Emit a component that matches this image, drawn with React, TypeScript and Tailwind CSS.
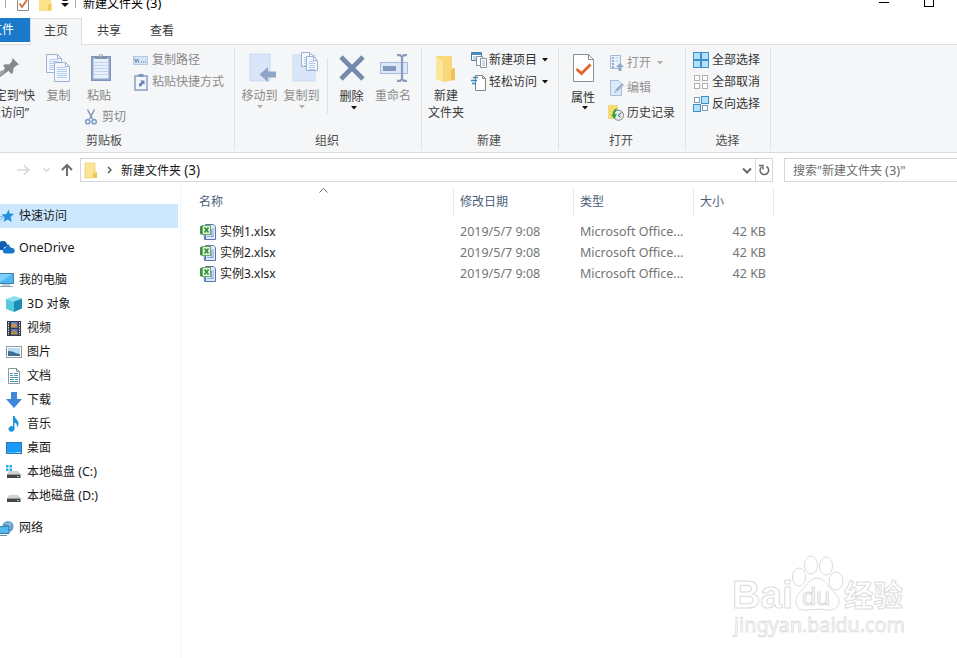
import React from 'react';

type Kids = { children?: React.ReactNode };

function Svg({ w, h, vb, className = '', children }: { w: number; h: number; vb?: string; className?: string } & Kids) {
  return (
    <svg width={w} height={h} viewBox={vb ?? `0 0 ${w} ${h}`} className={`block shrink-0 ${className}`} fill="none">
      {children}
    </svg>
  );
}

const Caret = ({ color = '#111', className = '' }: { color?: string; className?: string }) => (
  <Svg w={6} h={4} className={className}>
    <path d="M0 0h6L3 3.500z" fill={color} />
  </Svg>
);

const FolderIcon = ({ w, h }: { w: number; h: number }) => (
  <Svg w={w} h={h} vb="0 0 14 17">
    <path d="M1 1h10v8l2 1v6H1z" fill="#fbe08a" />
    <path d="M1 1h10v8l-2 2v5H1z" fill="#fce596" stroke="#ecc95e" strokeWidth=".7" />
    <path d="M13 10v6H9.500v-4z" fill="#edc455" />
  </Svg>
);

const PinIcon = () => (
  <Svg w={19} h={19}>
    <path d="M12.500 0L19 6.500l-2 .7L13.500 10l-.5 4.500-1.500 1.500-3-3.300L3 17l-3 2v-2.500L5 10.500 3.200 7.500 5 6.200l4.200.2L12 3z" fill="#85898c" />
    <path d="M0 13.500l3-1.500 1.500 1.500L1.500 17H0z" fill="#a3a6a9" />
  </Svg>
);

const Page = ({ x, y, w = 15, h = 19 }: { x: number; y: number; w?: number; h?: number }) => (
  <g transform={`translate(${x} ${y})`} stroke="#9db2d2">
    <path d={`M.5.5h${w - 5}l4 4v${h - 5}h-${w - 1}z`} fill="#f4f8fe" />
    <path d={`M${w - 4.5}.5v4h4`} />
    <path d={`M3 5.500h${w - 7}M3 7.500h${w - 6}M3 9.500h${w - 6}M3 11.500h${w - 6}M3 13.500h${w - 6}`} stroke="#b3cdf0" />
    {h > 18 && <path d={`M3 15.500h${w - 6}`} stroke="#b3cdf0" />}
  </g>
);

const CopyIcon = () => (
  <Svg w={25} h={28}>
    <Page x={0} y={0} w={16} h={19} />
    <Page x={8} y={8} w={16} h={20} />
  </Svg>
);

const PasteIcon = () => (
  <Svg w={22} h={29}>
    <rect x="1.500" y="4.500" width="19" height="24" fill="#90a6c9" stroke="#7f95ba" />
    <path d="M3.500 6.500h15v20h-15z" fill="#e9f0fc" />
    <path d="M4 10.500h14M4 13.500h14M4 16.500h14M4 19.500h14M4 22.500h14" stroke="#c3d4ee" />
    <path d="M5 4h4a2 2 0 0 1 4 0h4v3H5z" fill="#8194b0" />
    <circle cx="11" cy="3.500" r=".9" fill="#f5f6f7" />
  </Svg>
);

const ScissorsIcon = () => (
  <Svg w={12} h={16}>
    <path d="M2.500.5l5 9.500M9.500.5l-5 9.500" stroke="#8799b5" strokeWidth="1.600" />
    <circle cx="2.800" cy="12.700" r="2.100" stroke="#7f9cc8" strokeWidth="1.600" />
    <circle cx="9.200" cy="12.700" r="2.100" stroke="#7f9cc8" strokeWidth="1.600" />
  </Svg>
);

const PathIcon = () => (
  <Svg w={15} h={9}>
    <rect x=".5" y=".5" width="14" height="8" fill="#d3e3f8" stroke="#b5c9e5" />
    <path d="M1.500 2.500l1.500 4 1.500-3.500 1.500 3.500" stroke="#6a80a5" />
    <path d="M8 6h1M10 6h1M12 6h1" stroke="#6a80a5" />
  </Svg>
);

const PasteLinkIcon = () => (
  <Svg w={14} h={17}>
    <rect x="1" y="2" width="12" height="14" fill="#f3f7fd" stroke="#8fa4c6" strokeWidth="1.600" />
    <path d="M4.500 0h5v3h-5z" fill="#8196b8" />
    <path d="M5 12.500V10l2.500-2L6 6.500h4.500V11L9 9.500l-2 3z" fill="#6683b2" />
  </Svg>
);

const MoveIcon = () => (
  <Svg w={27} h={30}>
    <path d="M1 1h20v27H1z" fill="#d9e6f9" stroke="#cbdaf0" />
    <path d="M10.500 21.500l8.500-7.500v4.500h8v6h-8V29z" fill="#8fa4c6" />
  </Svg>
);

const CopyToIcon = () => (
  <Svg w={27} h={31}>
    <path d="M1 3h22v26H1z" fill="#d9e6f9" stroke="#cbdaf0" />
    <Page x={9} y={0} w={13} h={15} />
    <Page x={14} y={4} w={12} h={15} />
  </Svg>
);

const DeleteIcon = () => (
  <Svg w={26} h={26}>
    <path d="M2 2l22 22M24 2L2 24" stroke="#7389ad" strokeWidth="4.600" />
  </Svg>
);

const RenameIcon = () => (
  <Svg w={29} h={28}>
    <rect x=".5" y="8.500" width="27" height="11" fill="#dbe8fa" stroke="#a7bddd" />
    <rect x="3" y="12" width="13" height="5" fill="#8398bd" />
    <path d="M22 2v24M17 1.200h3l2 1.600 2-1.600h3M17 26.800h3l2-1.600 2 1.600h3" stroke="#8a9cba" strokeWidth="2.200" />
  </Svg>
);

const BigFolderIcon = () => (
  <Svg w={20} h={28}>
    <path d="M0 1h16v12l3 2v10l-11 2-8-3z" fill="#f8d878" />
    <path d="M0 1l7 5v21l-7-3z" fill="#fbe69c" />
    <path d="M15 14l4-1v12h-4z" fill="#edc45b" />
  </Svg>
);

const NewItemIcon = () => (
  <Svg w={16} h={16}>
    <path d="M.5.500h10v8h-10z" fill="#fff" stroke="#54809b" />
    <path d="M1 2h9" stroke="#3d95c6" strokeWidth="2" />
    <path d="M2 5h3M2 7h3" stroke="#6ab1dc" />
    <path d="M5.500 4.500h6v9h-6z" fill="#fff" stroke="#8a9299" />
    <path d="M9.500 6.500h6v9h-6z" fill="#fff" stroke="#8a959e" />
    <path d="M11 9h3M11 11h3M11 13h3" stroke="#8fbcd9" />
  </Svg>
);

const EasyAccessIcon = () => (
  <Svg w={16} h={17}>
    <path d="M4.500 1.500h7l3 3v12h-10z" fill="#fff" stroke="#7c878e" />
    <path d="M11.500 1.500v3h3" stroke="#7c878e" />
    <path d="M2 3.500h5M0 6.500h6M1 9.500h4" stroke="#2e86be" strokeWidth="1.400" />
  </Svg>
);

const PropsIcon = () => (
  <Svg w={23} h={29}>
    <path d="M1.500.500h15l5 5v22h-20z" fill="#fff" stroke="#8b8f92" />
    <path d="M16.500.500v5h5" stroke="#8b8f92" />
    <path d="M4.500 15l5 4.500 9-9" stroke="#e0642c" strokeWidth="2.800" />
  </Svg>
);

const OpenIcon = () => (
  <Svg w={14} h={16}>
    <path d="M.5.500h10v13H.5z" fill="#edf3fc" stroke="#a5b7d2" />
    <path d="M2 3h2M2 6h2M2 9h2M2 12h2" stroke="#7896c5" strokeWidth="1.500" />
    <path d="M5.500 3H9M5.500 6H9" stroke="#bfd0e8" />
    <path d="M10 8l4 4h-2.500v4h-3v-4H6z" fill="#8fa6ca" />
  </Svg>
);

const EditIcon = () => (
  <Svg w={14} h={16}>
    <path d="M.5.500h8l3 3v12H.5z" fill="#dce9fa" stroke="#a8bedd" />
    <path d="M4 13l1-3 7-7 2 2-7 7z" fill="#9db2d2" />
    <path d="M5 10l2 2" stroke="#fff" strokeWidth=".7" />
  </Svg>
);

const HistoryIcon = () => (
  <Svg w={16} h={16}>
    <path d="M0 0h10v14H0z" fill="#f6da77" />
    <circle cx="10.500" cy="10.300" r="5" fill="#e9edee" stroke="#7c878c" />
    <path d="M10 10.500l3.500-3M10 10.500l2.500 1.500" stroke="#44565e" />
    <path d="M8.500 3.500C5.500 4.500 4.500 7 4.800 9.500L3 9.800 6.500 14 9 9l-2 .3c0-2 .3-4 2.500-5.300z" fill="#2fa33a" />
  </Svg>
);

function SelectIcon({ kind }: { kind: 'all' | 'none' | 'invert' }) {
  const cells = [[0, 0], [8, 0], [0, 8], [8, 8]];
  return (
    <Svg w={16} h={16}>
      {cells.map(([x, y], i) => {
        const on = kind === 'all' || (kind === 'invert' && (i === 1 || i === 2));
        return on ? (
          <rect key={i} x={x + 0.5} y={y + 0.5} width="7" height="7" fill="#b4e0fa" stroke="#3b91c9" />
        ) : (
          <rect key={i} x={x + 1.5} y={y + 1.5} width="5" height="5" fill="#fff" stroke={kind === 'none' ? '#b0b0b0' : '#7f9bad'} />
        );
      })}
    </Svg>
  );
}

const XlsxIcon = () => (
  <Svg w={16} h={16}>
    <path d="M3.500 4.500h9v11h-8z" fill="#c9daf5" stroke="#5c7cba" />
    <path d="M5.500.500h8l2 2v13h-10z" fill="#dfe9fa" stroke="#5876ae" />
    <path d="M7 12.500h6.500M13 4v9M11.500 5v7" stroke="#8aaae0" />
    <path d="M0 2.500L2.500 1v10L0 10z" fill="#3a9440" />
    <rect x="2.500" y="1.500" width="8" height="9" fill="#dff2d8" stroke="#6aae64" />
    <path d="M4.500 3.500l4 5M8.500 3.500l-4 5" stroke="#2f8a38" strokeWidth="1.500" />
  </Svg>
);

/* Navigation pane icons */
const StarIcon = () => (
  <Svg w={16} h={16}>
    <path d="M9.500 1.500l1.300 4 4.200.5-3.300 3 1 5-4-2.500-4.200 2.500 1.200-4.500L2.500 6.500l5-.6z" fill="#2590d9" />
    <path d="M1 8.500l4 .5M0 12.500l4-2.500" stroke="#6bb7ea" />
  </Svg>
);
const CloudIcon = () => (
  <Svg w={16} h={16}>
    <path d="M0 10V5.500a4 4 0 0 1 8-1c1.500-.3 2.500.5 2.500 1.500L5.500 7 4 10z" fill="#0f5fae" />
    <path d="M6 13.500a2.800 2.800 0 0 1 0-5.500 3.400 3.400 0 0 1 6.300 0 2.800 2.800 0 0 1 1.200 5.500z" fill="#1377cd" />
  </Svg>
);
const PcIcon = () => (
  <Svg w={16} h={16}>
    <rect x="-1" y="1.500" width="15.500" height="10" fill="#4cb7f2" stroke="#3d83ac" />
    <path d="M0 11L13 2H0z" fill="#7fd0fa" />
    <path d="M3 13h8M1 14.500h13" stroke="#8aa3b2" />
  </Svg>
);
const CubeIcon = () => (
  <Svg w={16} h={16}>
    <path d="M0 3l8-3 8 2.500-8 3z" fill="#8adfea" />
    <path d="M0 3l8 2.500V16l-8-3z" fill="#57c9de" />
    <path d="M16 2.500v10L8 16V5.500z" fill="#1b8fb3" />
  </Svg>
);
const VideoIcon = () => (
  <Svg w={16} h={16}>
    <path d="M1 1h14v15H1z" fill="#343946" />
    <path d="M2.500 2v13M13.500 2v13" stroke="#d8dce2" strokeDasharray="1.500 1" />
    <path d="M5 2h6.500v5.500H5z" fill="#677dcc" />
    <path d="M5 5l3-2 3.500 3v1.500H5z" fill="#c8964b" />
    <path d="M5 9h6.500v5.500H5z" fill="#5673cf" />
    <path d="M5 12l3-2 3.500 2v2.500H5z" fill="#a98a58" />
  </Svg>
);
const ImageIcon = () => (
  <Svg w={16} h={16}>
    <rect x=".5" y="2.500" width="15" height="11" fill="#fff" stroke="#93999e" />
    <path d="M2 4h12v8H2z" fill="#b7dcf3" />
    <path d="M2 7l4 .5 5 2 3 .5v2H2z" fill="#3e6e94" />
  </Svg>
);
const DocIcon = () => (
  <Svg w={16} h={16}>
    <path d="M2.500.500h8l3 3v12h-11z" fill="#fff" stroke="#8b959b" />
    <path d="M10.500.500v3h3" stroke="#8b959b" />
    <path d="M4 5.500h3M8 5.500h4M4 7.500h3M8 7.500h4M4 9.500h8M4 11.500h4M9 11.500h3M4 13.500h8" stroke="#4d92b8" />
  </Svg>
);
const DownIcon = () => (
  <Svg w={16} h={16}>
    <path d="M5 0h6v7h5l-8 9-8-9h5z" fill="#3e87d8" />
  </Svg>
);
const MusicIcon = () => (
  <Svg w={16} h={16}>
    <path d="M7 0h1.500c.5 3 4 4 4 7.500 0 1.500-.5 2.500-1.500 4 .3-3-1-4.500-2.500-5v6.500A3 2.800 0 1 1 7 10.500z" fill="#1c93dd" />
  </Svg>
);
const DesktopIcon = () => (
  <Svg w={16} h={16}>
    <rect x=".5" y="2.500" width="15" height="11" fill="#1a9af7" stroke="#2878b8" />
    <path d="M1 12.500h14" stroke="#58b6fa" />
    <path d="M11 12.500h1M13 12.500h1" stroke="#fff" />
  </Svg>
);
const DriveIcon = ({ windows = false }: { windows?: boolean }) => (
  <Svg w={16} h={16}>
    <path d="M3 7h9l3 3.500H1z" fill="#d0d2d4" />
    <path d="M1 10.500h13.500V14H1z" fill="#43474a" />
    <path d="M11 12.500h2" stroke="#8fe394" />
    {windows && <path d="M0 1h2.500v2.500H0zM3.500 1H6v2.500H3.500zM0 4.500h2.500V7H0zM3.500 4.500H6V7H3.500z" fill="#24addd" />}
  </Svg>
);
const NetworkIcon = () => (
  <Svg w={16} h={16}>
    <circle cx="9" cy="6.500" r="5.500" fill="#5b9bc9" />
    <path d="M6 3c2 0 2 2 5 1v5M9 1.500l3 3" stroke="#a9d4ee" />
    <path d="M-1 7l11-1v7.500H-1z" fill="#52baf0" stroke="#3276a3" />
    <path d="M1 15.500h7" stroke="#5f8ca8" />
  </Svg>
);

function Group({ label, className, labelClass = '', children }: { label: string; className: string; labelClass?: string } & Kids) {
  return (
    <section className={`flex h-[107px] shrink-0 flex-col ${className}`}>
      <div className="flex h-[88px]">{children}</div>
      <div className={`h-4 text-center text-[#4d4d4d] ${labelClass}`}>{label}</div>
    </section>
  );
}

const Divider = () => <div className="mt-[3px] h-[102px] w-px shrink-0 bg-[#e1e3e5]" />;

function Row({ icon, children, className = '' }: { icon: React.ReactNode; className?: string } & Kids) {
  return (
    <div className={`flex h-4 items-center whitespace-nowrap ${className}`}>
      {icon}
      {children}
    </div>
  );
}

function Ribbon() {
  return (
    <div className="flex h-[108px] border-b border-[#d7dadc] bg-[#f5f6f7]">
      <Group label="剪贴板" className="w-[234px] overflow-hidden" labelClass="pr-[26px]">
        <div className="flex w-[35px] shrink-0 flex-col items-end text-[#3c3c3c]">
          <div className="mt-[13px] mr-4"><PinIcon /></div>
          <div className="mt-[11px] h-4 whitespace-nowrap">固定到“快</div>
          <div className="mt-px mr-1.5 h-4 whitespace-nowrap">速访问”</div>
        </div>
        <div className="ml-[11px] flex w-[25px] flex-col items-center text-[#858585]">
          <div className="mt-[9px]"><CopyIcon /></div>
          <div className="mt-1.5 h-4 whitespace-nowrap">复制</div>
        </div>
        <div className="ml-[14px] flex w-[42px] flex-col text-[#858585]">
          <div className="mt-[7px] ml-[5px]"><PasteIcon /></div>
          <div className="mt-[7px] ml-[2px] h-4 whitespace-nowrap">粘贴</div>
          <Row className="mt-[5px] gap-[5px]" icon={<ScissorsIcon />}>剪切</Row>
        </div>
        <div className="ml-1.5 flex flex-col text-[#8a8a8a]">
          <Row className="mt-[7px] gap-[4px]" icon={<PathIcon />}>复制路径</Row>
          <Row className="mt-1.5 gap-[4px] pl-px" icon={<PasteLinkIcon />}>粘贴快捷方式</Row>
        </div>
      </Group>
      <Divider />
      <Group label="组织" className="w-[186px]" labelClass="pr-[2px]">
        <div className="ml-1.5 flex w-[37px] flex-col items-center text-[#8c8c8c]">
          <div className="mt-2 ml-1.5"><MoveIcon /></div>
          <div className="mt-[5px] h-4 whitespace-nowrap">移动到</div>
          <Caret color="#b0b0b0" className="mt-px" />
        </div>
        <div className="ml-[5px] flex w-[37px] flex-col items-center text-[#8c8c8c]">
          <div className="mt-[7px] ml-2"><CopyToIcon /></div>
          <div className="mt-[5px] h-4 whitespace-nowrap">复制到</div>
          <Caret color="#b0b0b0" className="mt-px" />
        </div>
        <div className="mt-[13px] ml-[7px] h-[56px] w-px bg-[#dfe1e3]" />
        <div className="ml-[11px] flex w-[25px] flex-col items-center text-[#333]">
          <div className="mt-[10px]"><DeleteIcon /></div>
          <div className="mt-[8px] h-4 whitespace-nowrap">删除</div>
          <Caret className="mt-px ml-1" />
        </div>
        <div className="ml-[11px] flex w-9 flex-col items-center text-[#8c8c8c]">
          <div className="mt-[9px] ml-[2px]"><RenameIcon /></div>
          <div className="mt-1.5 h-4 whitespace-nowrap">重命名</div>
        </div>
      </Group>
      <Divider />
      <Group label="新建" className="w-[136px]" labelClass="pr-[2px]">
        <div className="ml-[6px] flex w-9 flex-col items-center text-[#3c3c3c]">
          <div className="mt-[10px]"><BigFolderIcon /></div>
          <div className="mt-[5px] h-4 whitespace-nowrap">新建</div>
          <div className="mt-px h-4 whitespace-nowrap">文件夹</div>
        </div>
        <div className="ml-[7px] flex flex-col text-[#333]">
          <Row className="mt-[7px] gap-[2px]" icon={<NewItemIcon />}>新建项目<Caret className="ml-[3px]" /></Row>
          <Row className="mt-1.5 gap-[2px]" icon={<EasyAccessIcon />}>轻松访问<Caret className="ml-[3px]" /></Row>
        </div>
      </Group>
      <Divider />
      <Group label="打开" className="w-[126px]" labelClass="pr-[2px]">
        <div className="ml-[12px] flex w-[24px] flex-col items-center text-[#333]">
          <div className="mt-[9px]"><PropsIcon /></div>
          <div className="mt-[7px] h-4 whitespace-nowrap">属性</div>
          <Caret className="ml-1" />
        </div>
        <div className="ml-[13px] flex flex-col text-[#3c3c3c]">
          <Row className="mt-[10px] gap-[3px] pl-[2px] text-[#939393]" icon={<OpenIcon />}>打开<Caret color="#b0b0b0" className="ml-[3px]" /></Row>
          <Row className="mt-[9px] gap-[3px] pl-[2px] text-[#939393]" icon={<EditIcon />}>编辑</Row>
          <Row className="mt-[9px] gap-[3px]" icon={<HistoryIcon />}>历史记录</Row>
        </div>
      </Group>
      <Divider />
      <Group label="选择" className="w-[84px]" labelClass="pr-px">
        <div className="ml-[7px] flex flex-col gap-1.5 pt-[7px] text-[#333]">
          <Row className="gap-[3px]" icon={<SelectIcon kind="all" />}>全部选择</Row>
          <Row className="gap-[3px]" icon={<SelectIcon kind="none" />}>全部取消</Row>
          <Row className="gap-[3px]" icon={<SelectIcon kind="invert" />}>反向选择</Row>
        </div>
      </Group>
      <Divider />
    </div>
  );
}

function TitleBar() {
  return (
    <div className="flex h-[18px] overflow-hidden">
      <div className="ml-[5px] h-2 w-px bg-[#aaa]" />
      <Svg w={12} h={11} className="ml-[11px]">
        <path d="M.5-1v11.500h11V-1" fill="#fff" stroke="#8c8c8c" />
        <path d="M2.500 3.500L5 7l5-7" stroke="#d6683c" strokeWidth="1.800" />
      </Svg>
      <Svg w={13} h={11} className="ml-[10px]">
        <path d="M0 0h12v3l1 1v7H0z" fill="#fbe18a" />
        <path d="M9 5l3-2v7H9z" fill="#efcb62" />
      </Svg>
      <Svg w={8} h={8} className="ml-[9px]">
        <path d="M1.500.5h5" stroke="#111" />
        <path d="M0 3h8L4 7z" fill="#111" />
      </Svg>
      <div className="ml-[6px] h-2 w-px bg-[#aaa]" />
      <div className="-mt-[5px] ml-[7px] h-4 whitespace-nowrap text-black">新建文件夹 <span className="text-[13px]">(3)</span></div>
      <div className="mt-[2px] ml-auto h-px w-[10px] bg-black" />
      <div className="mr-[23px] ml-[35px] h-[7px] w-[10px] border border-t-0 border-black" />
    </div>
  );
}

function Tabs() {
  return (
    <div className="flex h-[27px] border-b border-[#dcdfe1] text-[#3a3a3a]">
      <div className="flex h-6 w-[30px] items-center justify-end overflow-hidden bg-[#1979ca] pr-4 text-white">
        <span className="whitespace-nowrap">文件</span>
      </div>
      <div className="z-10 -mb-px flex h-[27px] w-[52px] items-center justify-center border-x border-t border-[#dcdfe1] bg-[#f5f6f7] pb-[2px]">主页</div>
      <div className="ml-[15px] flex h-[25px] items-center">共享</div>
      <div className="ml-[29px] flex h-[25px] items-center">查看</div>
    </div>
  );
}

function AddressBar() {
  return (
    <div className="flex h-[29px] pt-[5px]">
      <div className="flex w-20 items-center">
        <Svg w={76} h={14}>
          <path d="M17 7h12M24 2.500L29 7l-5 4.500" stroke="#d6d6d6" strokeWidth="1.500" />
          <path d="M43.500 5.500l3 2.500 3-2.500" stroke="#cfcfcf" strokeWidth="1.300" />
          <path d="M67 13V2M62 7l5-5 5 5" stroke="#6e6e6e" strokeWidth="2" />
        </Svg>
      </div>
      <div className="flex h-6 w-[693px] items-center border border-[#d5d7d9]">
        <div className="ml-[3px]"><FolderIcon w={14} h={17} /></div>
        <Svg w={5} h={8} className="ml-[9px]"><path d="M1 1l3 3-3 3" stroke="#555" strokeWidth="1.400" /></Svg>
        <div className="ml-[9px] h-4 whitespace-nowrap text-[#1a1a1a]">新建文件夹 <span className="text-[13.500px]">(3)</span></div>
        <Svg w={10} h={7} className="ml-auto"><path d="M1 1.500l4 4 4-4" stroke="#6a6a6a" strokeWidth="2" /></Svg>
        <div className="ml-[3px] flex h-[22px] w-[17px] items-center justify-center border-l border-[#d9dbdd]">
          <Svg w={12} h={12}>
            <path d="M3.500 3A4.300 4.300 0 1 0 8.500 2.500" stroke="#666" strokeWidth="1.500" />
            <path d="M1 1.500h4v4" stroke="#666" strokeWidth="1.400" />
          </Svg>
        </div>
      </div>
      <div className="ml-[11px] flex h-6 flex-1 items-center border border-r-0 border-[#d5d7d9] pl-2 text-[#6d6d6d]">
        <span className="whitespace-nowrap">搜索"新建文件夹 <span className="text-[13px]">(3)"</span></span>
      </div>
    </div>
  );
}

const places: { icon: React.ReactNode; name: string; top?: boolean }[] = [
  { icon: <StarIcon />, name: '快速访问', top: true },
  { icon: <CloudIcon />, name: 'OneDrive', top: true },
  { icon: <PcIcon />, name: '我的电脑', top: true },
  { icon: <CubeIcon />, name: '3D 对象' },
  { icon: <VideoIcon />, name: '视频' },
  { icon: <ImageIcon />, name: '图片' },
  { icon: <DocIcon />, name: '文档' },
  { icon: <DownIcon />, name: '下载' },
  { icon: <MusicIcon />, name: '音乐' },
  { icon: <DesktopIcon />, name: '桌面' },
  { icon: <DriveIcon windows />, name: '本地磁盘 (C:)' },
  { icon: <DriveIcon />, name: '本地磁盘 (D:)' },
  { icon: <NetworkIcon />, name: '网络', top: true },
];

function PlaceName({ name }: { name: string }) {
  // Latin runs are set slightly larger than the Chinese ones.
  return (
    <span>
      {name.split(/([\x21-\x7e]+)/).map((part, i) =>
        i % 2 ? <span key={i} className="text-[12.500px]">{part}</span> : part,
      )}
    </span>
  );
}

function NavPane() {
  return (
    <nav className="w-[181px] shrink-0 border-r border-[#f1f4f8] pt-[22px] text-[#1a1a1a]">
      {places.map((p, i) => (
        <div
          key={p.name}
          className={`flex h-6 items-center whitespace-nowrap ${i === 0 ? 'bg-[#cce8ff]' : ''} ${p.top && i > 0 ? 'mt-2' : ''} ${p.top ? '-ml-px w-[179px] gap-1' : 'w-[178px] gap-[5px] pl-[6px]'}`}
        >
          {p.icon}
          <PlaceName name={p.name} />
        </div>
      ))}
    </nav>
  );
}

function FileList() {
  return (
    <main className="pt-[7px]">
      <div className="flex h-[26px] items-center text-[#4c607a]">
        <div className="flex h-full w-[273px] items-center border-r border-[#e4e6e8] pl-[18px]">
          名称
          <Svg w={9} h={5} className="mb-6 ml-[96px]"><path d="M.5 4.500l4-4 4 4" stroke="#666" /></Svg>
        </div>
        <div className="flex h-full w-[120px] items-center border-r border-[#e4e6e8] pl-1.5">修改日期</div>
        <div className="flex h-full w-[120px] items-center border-r border-[#e4e6e8] pl-1.5">类型</div>
        <div className="flex h-full w-20 items-center border-r border-[#e4e6e8] pl-1.5">大小</div>
      </div>
      <div className="pt-[6px]">
        {['实例1.xlsx', '实例2.xlsx', '实例3.xlsx'].map((name) => (
          <div key={name} className="flex h-[21px] items-center whitespace-nowrap text-[#757575]">
            <div className="flex w-[279px] items-center gap-1 pl-[19px] text-[#1a1a1a]">
              <XlsxIcon />
              {name}
            </div>
            <div className="w-[120px] text-[12.500px]">2019/5/7 9:08</div>
            <div className="w-[120px] text-[12.500px]">Microsoft Office...</div>
            <div className="w-[66px] text-right text-[12.500px]">42 KB</div>
          </div>
        ))}
      </div>
    </main>
  );
}

function Watermark() {
  return (
    <svg className="absolute top-[550px] left-[725px]" width="190" height="92" viewBox="0 0 190 92" fill="#fff" stroke="#dcdcdc" strokeLinejoin="round">
      <text x="7" y="58" fontSize="39" fontFamily="'Liberation Sans', sans-serif" fontWeight="700" textLength="61" lengthAdjust="spacingAndGlyphs">Bai</text>
      <ellipse cx="74" cy="27" rx="6.500" ry="9" />
      <ellipse cx="86" cy="15" rx="6.500" ry="9" />
      <ellipse cx="101" cy="16" rx="6.500" ry="9" />
      <ellipse cx="111" cy="31" rx="7" ry="9" />
      <path d="M92 28c6 0 9 5 12 9s10 8 10 14-5 10-11 9-15-1-21 0-11-2-11-9 6-10 9-14 6-9 12-9z" />
      <text x="77" y="55" fontSize="23" fontFamily="'Liberation Sans', sans-serif" textLength="28" lengthAdjust="spacingAndGlyphs">du</text>
      <text x="119" y="56" fontSize="30" fontWeight="700" fontFamily="'Noto Sans CJK SC', sans-serif" textLength="59" lengthAdjust="spacingAndGlyphs">经验</text>
      <text x="9" y="82" fontSize="20" strokeWidth=".8" fontFamily="'Noto Sans', sans-serif" textLength="171" lengthAdjust="spacingAndGlyphs">jingyan.baidu.com</text>
    </svg>
  );
}

export default function App() {
  return (
    <div className="relative flex h-[658px] w-[957px] flex-col overflow-hidden bg-white font-['Noto_Sans','Noto_Sans_CJK_SC',sans-serif] text-[12px] leading-4">
      <TitleBar />
      <Tabs />
      <Ribbon />
      <AddressBar />
      <div className="flex flex-1">
        <NavPane />
        <FileList />
      </div>
      <Watermark />
    </div>
  );
}
